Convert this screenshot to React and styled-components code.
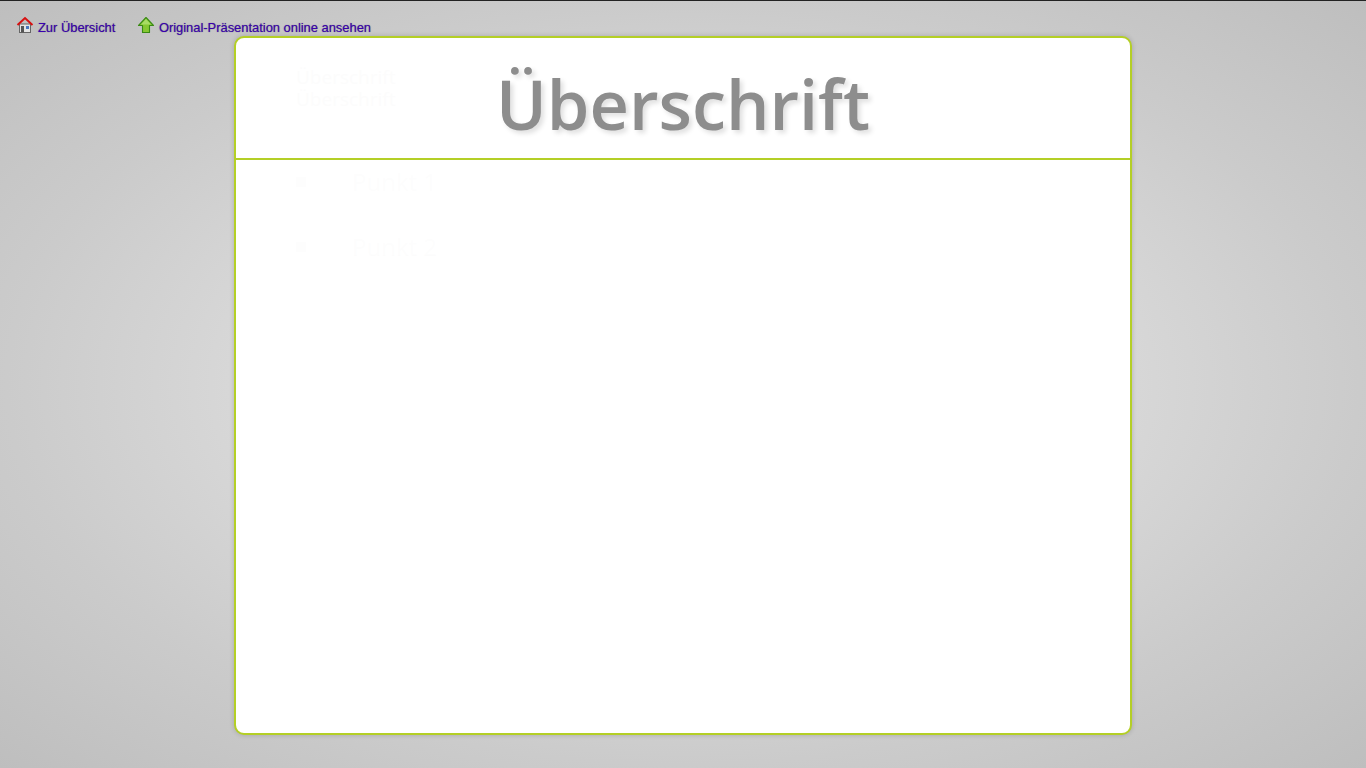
import React from 'react'
import styled, { createGlobalStyle } from 'styled-components'

const GlobalStyle = createGlobalStyle`
html, body {
    margin: 0;
    padding: 0;
    height: 100%;
}
body {
    overflow: hidden;
    font-family: "Liberation Sans", Arial, sans-serif;
}
`

const Page = styled.div`
    position: relative;
    box-sizing: border-box;
    height: 768px;
    padding-top: 35px;
    border-top: 1px solid #222;
    background: radial-gradient(ellipse at center, #dedede 0%, #d8d8d8 45%, #cbcbcb 70%, #bebebe 100%);
`

const Nav = styled.nav`
    position: absolute;
    top: 15px;
    left: 16px;
    display: flex;
    gap: 21.5px;
`

const NavLink = styled.a`
    display: flex;
    align-items: flex-start;
    gap: 4px;
    color: #3a00b0;
    font-size: 12.9px;
    line-height: 15px;
    text-shadow: 0 0 1px rgba(0, 0, 0, 0.5);
    text-decoration: none;
    span {
        margin-top: 4px;
    }
`

const Card = styled.main`
    box-sizing: border-box;
    width: 898px;
    height: 699px;
    margin: 0 auto;
    background: #fff;
    border: 2px solid #b4cf26;
    border-radius: 10px;
    box-shadow: 0 0 5px rgba(0, 0, 0, 0.18);
    overflow: hidden;
`

const Header = styled.header`
    position: relative;
    display: flex;
    justify-content: center;
    height: 120px;
    border-bottom: 2px solid #b4cf26;
`

const Title = styled.h1`
    margin: 19px 0 0;
    color: #8d8d8d;
    font-family: "Open Sans", sans-serif;
    font-size: 68.5px;
    font-weight: 600;
    line-height: 94px;
    text-shadow: 3px 3px 5px rgba(0, 0, 0, 0.13);
`

const GhostTitle = styled.div`
    position: absolute;
    top: 28px;
    left: 60px;
    width: 170px;
    color: #000;
    opacity: 0.006;
    font-family: "Open Sans", sans-serif;
    font-size: 19px;
    line-height: 22px;
`

const GhostList = styled.ul`
    display: flex;
    flex-direction: column;
    gap: 33px;
    margin: 0;
    padding: 6px 0 0 60px;
    list-style: none;
    opacity: 0.008;
`

const GhostItem = styled.li`
    display: flex;
    align-items: center;
    gap: 46px;
    color: #000;
    font-family: "Open Sans", sans-serif;
    font-size: 24px;
    line-height: 32px;
    &::before {
        content: "";
        width: 10px;
        height: 10px;
        background: #000;
    }
`

const HomeIcon = () => (
    <svg width="18" height="18" viewBox="0 0 18 18">
        <rect x="3.5" y="8" width="11" height="8.5" fill="#e4e4e4" stroke="#666" />
        <rect x="5" y="10" width="3" height="6.5" fill="#555" />
        <rect x="10" y="10" width="3" height="3" fill="#4a78c0" />
        <path d="M1.5 9 L9 2 L16.5 9" fill="none" stroke="#d81010" strokeWidth="2" />
    </svg>
)

const UpIcon = () => (
    <svg width="18" height="18" viewBox="0 0 18 18">
        <path d="M9 1.5 L16.5 9.5 H12.5 V16.5 H5.5 V9.5 H1.5 Z" fill="#86c832" stroke="#3a8a14" strokeWidth="1.1" strokeLinejoin="round" />
        <path d="M9 3 L14 8.5 H4 Z" fill="#a8dc64" />
    </svg>
)

const App = () => {
    return (
        <Page>
            <GlobalStyle />
            <Nav>
                <NavLink href="#"><HomeIcon /><span>Zur Übersicht</span></NavLink>
                <NavLink href="#"><UpIcon /><span>Original-Präsentation online ansehen</span></NavLink>
            </Nav>
            <Card>
                <Header>
                    <GhostTitle>Überschrift Überschrift</GhostTitle>
                    <Title>Überschrift</Title>
                </Header>
                <GhostList>
                    <GhostItem>Punkt 1</GhostItem>
                    <GhostItem>Punkt 2</GhostItem>
                </GhostList>
            </Card>
        </Page>
    )
}

export default App
